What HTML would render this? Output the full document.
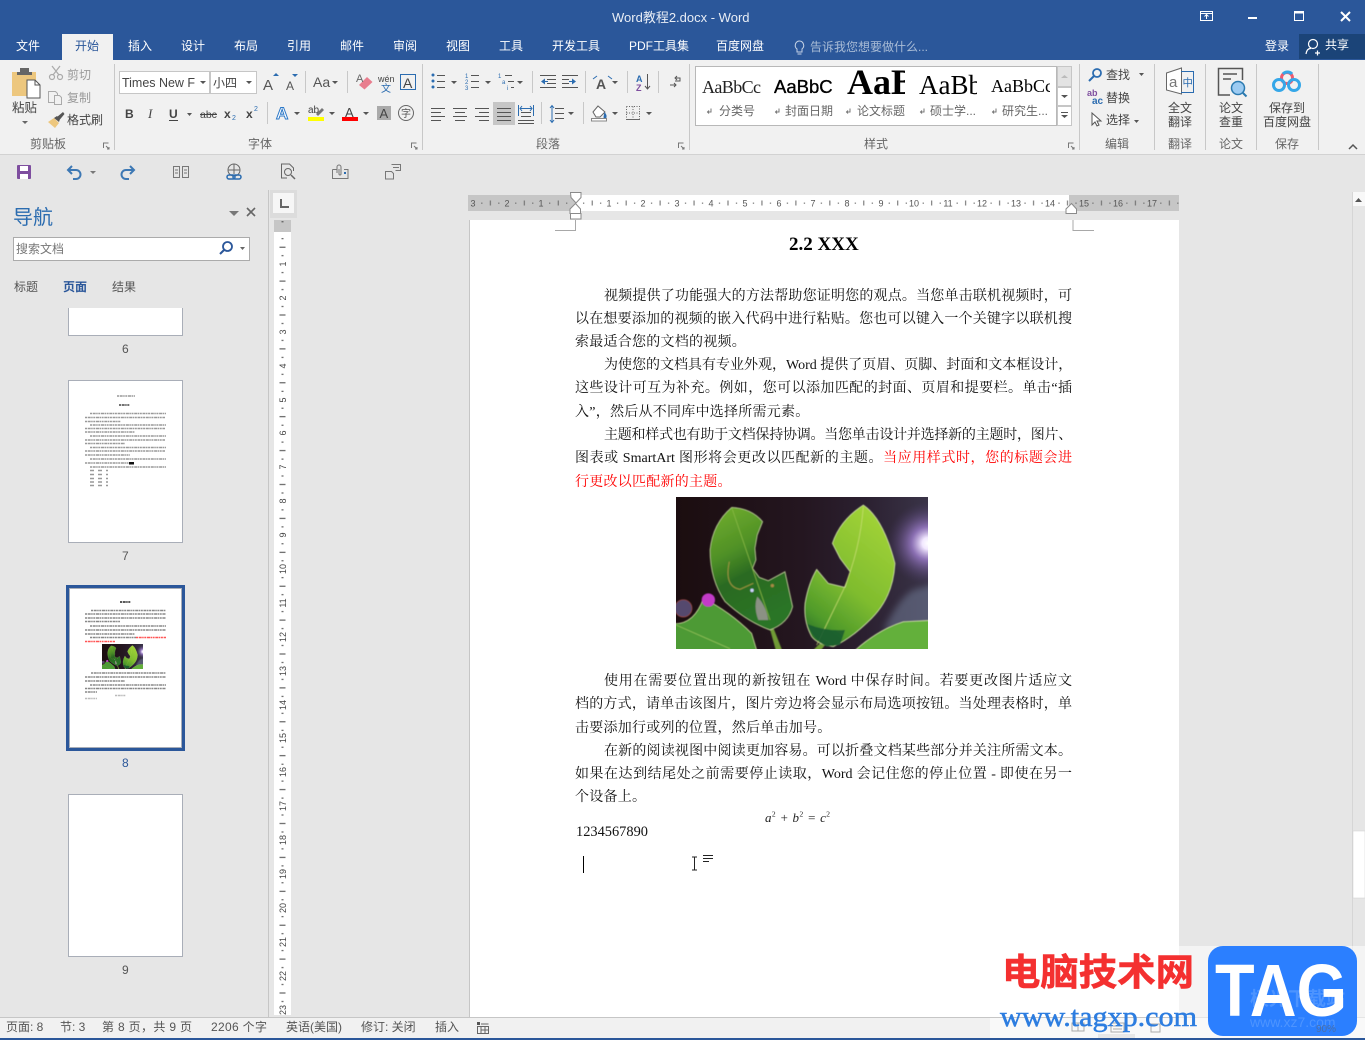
<!DOCTYPE html>
<html lang="zh"><head><meta charset="utf-8"><title>Word教程2.docx - Word</title>
<style>
html,body{margin:0;padding:0;background:#e6e6e6}
#root{position:relative;width:1365px;height:1040px;overflow:hidden;background:#e6e6e6}
svg{position:absolute;left:0;top:0}
svg text{font-family:"Liberation Sans","Noto Sans CJK SC",sans-serif}
.r{font-size:12px;fill:#444}.g{font-size:12px;fill:#666}.w{font-size:12px;fill:#fff}.d{font-size:12px;fill:#9a9a9a}
.s{font-size:12px;fill:#555}.ru{font-size:9px;fill:#555;text-anchor:middle}
.l{fill:none;stroke:#555;stroke-width:1}.b{fill:none;stroke:#2b6cb0;stroke-width:1}
.dl{position:absolute;font:14px/23px "Liberation Serif","Noto Serif CJK SC",serif;color:#111;text-align:justify;text-align-last:justify;white-space:nowrap}
.f{left:575px;width:497px}.i{left:604px;width:468px}.e{left:575px;text-align-last:left}.red{color:#f00}
</style></head><body><div id="root">
<svg width="1365" height="1040" viewBox="0 0 1365 1040">
<defs>
<filter id="bl" x="-5%" y="-5%" width="110%" height="110%"><feGaussianBlur stdDeviation="1.500"/></filter>
<filter id="bl2" x="-10%" y="-10%" width="120%" height="120%"><feGaussianBlur stdDeviation="10"/></filter>
<filter id="tb" x="-5%" y="-5%" width="110%" height="110%"><feGaussianBlur stdDeviation=".35"/></filter>
<pattern id="hp" patternUnits="userSpaceOnUse" width="33.95" height="16" patternTransform="translate(575,195)"><rect x="8.2" y="7.5" width="1" height="1.4" fill="#666"/><rect x="16.7" y="5.5" width="1" height="5" fill="#666"/><rect x="25.2" y="7.5" width="1" height="1.4" fill="#666"/></pattern>
<pattern id="vp" patternUnits="userSpaceOnUse" width="17" height="33.9" patternTransform="translate(274,230)"><rect x="7.5" y="8.2" width="2" height="1" fill="#444"/><rect x="5.5" y="16.7" width="6" height="1" fill="#444"/><rect x="7.5" y="25.2" width="2" height="1" fill="#444"/></pattern>
<linearGradient id="lg1" x1="0" y1="0" x2=".35" y2="1"><stop offset="0" stop-color="#74b02e"/><stop offset=".4" stop-color="#4f9026"/><stop offset=".62" stop-color="#2a6a22"/><stop offset="1" stop-color="#2c7426"/></linearGradient>
<linearGradient id="lg2" x1=".7" y1="0" x2=".2" y2="1"><stop offset="0" stop-color="#a2d338"/><stop offset=".55" stop-color="#7fbc2e"/><stop offset=".85" stop-color="#4f9a2c"/><stop offset="1" stop-color="#2c7428"/></linearGradient>
<radialGradient id="sun" cx="774" cy="160" r="125" gradientUnits="userSpaceOnUse"><stop offset="0" stop-color="#fff"/><stop offset=".14" stop-color="#f2e8ff"/><stop offset=".4" stop-color="#a583d6" stop-opacity=".75"/><stop offset="1" stop-color="#4a3a68" stop-opacity="0"/></radialGradient>
<linearGradient id="bgl" x1="0" y1="0" x2="1" y2="0"><stop offset="0" stop-color="#1b0d0f"/><stop offset=".5" stop-color="#241620"/><stop offset=".75" stop-color="#2b2030"/><stop offset="1" stop-color="#3a3448"/></linearGradient>
<symbol id="leaf" viewBox="18 21 756 456" preserveAspectRatio="none">
<rect x="18" y="21" width="756" height="456" fill="url(#bgl)"/>
<path d="M640 420Q690 320 730 300L800 280V420Z" fill="#75819c" opacity=".5" filter="url(#bl2)"/>
<rect x="18" y="21" width="756" height="456" fill="url(#sun)"/>
<g filter="url(#bl)">
<circle cx="40" cy="355" r="26" fill="#54486e" stroke="#a44a3c" stroke-width="2"/>
<path d="M305 400L340 490H320L295 400Z" fill="#6f9a36"/><path d="M470 440L420 490H445L490 435Z" fill="#6f9a36"/>
<path d="M185 52Q245 55 278 95L262 135L255 175L258 210L248 235L268 262L295 272L345 245L368 350Q355 400 300 420Q230 395 165 335Q120 270 120 180Q128 100 185 52Z" fill="url(#lg1)" stroke="#c9dba0" stroke-width="2"/>
<path d="M185 52L300 390" stroke="#8cbb46" stroke-width="2" fill="none"/><path d="M178 215Q162 290 210 298L250 280" stroke="#9a9440" stroke-width="3" fill="none"/>
<path d="M262 320Q290 350 295 390L265 390Q250 350 262 320Z" fill="#8b9184"/><circle cx="246" cy="301" r="5" fill="#cfd6ff"/><circle cx="307" cy="287" r="5" fill="#a88a44"/>
<path d="M580 45Q640 85 675 220Q670 320 605 385Q545 445 490 470Q445 465 425 440Q400 395 405 340Q415 280 440 238L475 280L525 292L540 245L510 205L487 160Q510 90 580 45Z" fill="url(#lg2)" stroke="#dcebb0" stroke-width="2"/>
<path d="M580 50Q570 180 520 300L440 465" stroke="#c9df70" stroke-width="2" fill="none"/>
<path d="M412 402Q470 425 525 420L510 465L470 470Q430 450 412 402Z" fill="#1b5c30" opacity=".9"/>
<path d="M100 325Q180 365 245 430L263 490H0V400Q70 410 100 325Z" fill="#4d9a34" stroke="#cfe3a0" stroke-width="2"/>
<path d="M18 405L180 476" stroke="#9cc860" stroke-width="2" fill="none"/>
<path d="M545 490Q620 420 700 395L800 390V490Z" fill="#63b03a" stroke="#dcebb0" stroke-width="2"/>
<circle cx="115" cy="330" r="20" fill="#c33ac8"/>
</g>
</symbol>
</defs>

<!-- title / tabs -->
<rect width="1365" height="60" fill="#2b579a"/>
<text x="612" y="22" style="font-size:13px;fill:#e8edf5">Word教程2.docx - Word</text>
<g fill="none" stroke="#fff" stroke-width="1"><rect x="1200.5" y="11.5" width="12" height="9"/><path d="M1200 13.5h13M1206.5 19v-4M1204.5 16.5l2-2 2 2"/><rect x="1294.5" y="11.5" width="9" height="9" /><path d="M1294 12.5h10" stroke-width="2"/><path d="M1341 12l9 9M1350 12l-9 9" stroke-width="2"/></g>
<rect x="1248" y="17" width="9" height="2" fill="#fff"/>
<rect x="62" y="34" width="51" height="26" fill="#f1f1f1"/>
<rect x="1299" y="34" width="66" height="25" fill="#1b4478"/>
<g class="tabs">
<text x="16" y="50" class="w">文件</text><text x="75" y="50" class="r" style="fill:#2b579a">开始</text><text x="128" y="50" class="w">插入</text><text x="181" y="50" class="w">设计</text><text x="234" y="50" class="w">布局</text><text x="287" y="50" class="w">引用</text><text x="340" y="50" class="w">邮件</text><text x="393" y="50" class="w">审阅</text><text x="446" y="50" class="w">视图</text><text x="499" y="50" class="w">工具</text><text x="552" y="50" class="w">开发工具</text><text x="629" y="50" class="w">PDF工具集</text><text x="716" y="50" class="w">百度网盘</text>
<text x="810" y="51" style="font-size:12px;fill:#a9bcd6">告诉我您想要做什么...</text>
<text x="1265" y="50" class="w">登录</text><text x="1325" y="49" class="w">共享</text></g>
<path d="M799 41a4.5 4.5 0 0 1 3 8v3h-5v-3a4.5 4.5 0 0 1 2-8zM797.500 54h4" fill="none" stroke="#c5d2e5"/>
<g fill="none" stroke="#fff" stroke-width="1.200"><circle cx="1313" cy="44" r="4.500"/><path d="M1306 54q1-6 5-5.500M1315 53h5M1317.500 50.500v5"/></g>

<!-- ribbon -->
<rect y="60" width="1365" height="94" fill="#f1f1f1"/><rect y="154" width="1365" height="1" fill="#d2d2d2"/>
<g fill="#c8c8c8"><rect x="114" y="64" width="1" height="86"/><rect x="422" y="64" width="1" height="86"/><rect x="689" y="64" width="1" height="86"/><rect x="1079" y="64" width="1" height="86"/><rect x="1154" y="64" width="1" height="86"/><rect x="1205" y="64" width="1" height="86"/><rect x="1256" y="64" width="1" height="86"/><rect x="1318" y="64" width="1" height="86"/>
<rect x="305" y="71" width="1" height="22"/><rect x="347" y="71" width="1" height="22"/><rect x="267" y="102" width="1" height="22"/><rect x="532" y="71" width="1" height="22"/><rect x="585" y="71" width="1" height="22"/><rect x="627" y="71" width="1" height="22"/><rect x="658" y="71" width="1" height="22"/><rect x="541" y="102" width="1" height="22"/><rect x="583" y="102" width="1" height="22"/></g>
<g class="labels"><text x="30" y="148" class="g">剪贴板</text><text x="248" y="148" class="g">字体</text><text x="536" y="148" class="g">段落</text><text x="864" y="148" class="g">样式</text><text x="1105" y="148" class="g">编辑</text><text x="1168" y="148" class="g">翻译</text><text x="1219" y="148" class="g">论文</text><text x="1275" y="148" class="g">保存</text></g>
<!-- launchers -->
<g fill="none" stroke="#777"><path d="M103.500 148v-5h5M106 146l3 3M109 147v2h-2"/><path d="M411.500 148v-5h5M414 146l3 3M417 147v2h-2"/><path d="M678.500 148v-5h5M681 146l3 3M684 147v2h-2"/><path d="M1068.500 148v-5h5M1071 146l3 3M1074 147v2h-2"/></g>
<path d="M1349 149l4-4 4 4" fill="none" stroke="#555" stroke-width="1.500"/>

<!-- clipboard -->
<path d="M12 72h24v24H12z" fill="#edc77e"/><rect x="20" y="68" width="9" height="6" fill="#666"/><rect x="17" y="72" width="15" height="3" fill="#666"/>
<path d="M27 80h8l5 5v13H27z" fill="#fff" stroke="#555"/><path d="M35 80v5h5" fill="none" stroke="#555"/>
<text x="12" y="112" class="r" style="font-size:12.500px">粘贴</text><path d="M22 121h6l-3 3z" fill="#666"/>
<g fill="none" stroke="#aaa" stroke-width="1.200"><circle cx="52" cy="77" r="2.500"/><circle cx="60" cy="77" r="2.500"/><path d="M53 75l7-9M59 75l-7-9"/></g>
<g fill="none" stroke="#aaa"><path d="M48.500 91.500h7l2 2v9h-9z"/><path d="M54.500 95.500h5l2 2v7h-7z" fill="#f1f1f1"/></g>
<text x="67" y="79" class="d">剪切</text><text x="67" y="102" class="d">复制</text>
<path d="M48 122l6-4 5 5-4 5z" fill="#edc77e"/><path d="M54 118l3-2 3 3-1 3zM57 117l6-5 1.500 2-5 6z" fill="#555"/>
<text x="67" y="124" class="r">格式刷</text>

<!-- font -->
<rect x="119.500" y="71.500" width="90" height="22" fill="#fff" stroke="#c6c6c6"/><rect x="210.500" y="71.500" width="46" height="22" fill="#fff" stroke="#c6c6c6"/>
<text x="122" y="87" textLength="73" style="font-size:12.500px;fill:#444">Times New F</text><text x="213" y="87" class="r">小四</text>
<g fill="#555"><path d="M200 81h6l-3 3zM246 81h6l-3 3zM332 81h6l-3 3zM187 113h5l-2.500 3zM294 112h6l-3 3zM329 112h6l-3 3zM363 112h6l-3 3zM451 81h6l-3 3zM485 81h6l-3 3zM517 81h6l-3 3zM612 81h6l-3 3zM568 112h6l-3 3zM612 112h6l-3 3zM646 112h6l-3 3zM1139 73h5l-2.500 3zM1134 120h5l-2.500 3z"/></g>
<text x="263" y="90" style="font-size:15px;fill:#555">A</text><path d="M273 76l3-3 3 3z" fill="#2b6cb0"/>
<text x="286" y="90" style="font-size:12px;fill:#555">A</text><path d="M292 74h6l-3 3z" fill="#2b6cb0"/>
<text x="313" y="87" style="font-size:14px;fill:#555">Aa</text>
<path d="M359 85l8-8 5.500 5-8 7.500z" fill="#e87d8e"/><text x="356" y="82" style="font-size:11px;fill:#666">A</text>
<text x="378" y="82" style="font-size:9px;fill:#444">wén</text><text x="381" y="92" style="font-size:10px;fill:#2b6cb0">文</text>
<rect x="400.500" y="74.500" width="15" height="15" fill="none" stroke="#2b6cb0"/><text x="403" y="88" style="font-size:14px;fill:#444">A</text>
<text x="125" y="118" style="font-size:12px;font-weight:700;fill:#444">B</text><text x="148" y="118" style="font-size:13px;font-style:italic;font-family:'Liberation Serif';fill:#444">I</text>
<text x="169" y="118" style="font-size:12px;font-weight:700;fill:#444">U</text><rect x="169" y="120" width="9" height="1" fill="#444"/>
<text x="200" y="118" style="font-size:10.500px;fill:#444">abc</text><rect x="200" y="114" width="17" height="1" fill="#444"/>
<text x="224" y="118" style="font-size:12px;font-weight:700;fill:#444">x</text><text x="232" y="120" style="font-size:7px;fill:#2b6cb0">2</text>
<text x="246" y="118" style="font-size:12px;font-weight:700;fill:#444">x</text><text x="254" y="111" style="font-size:7px;fill:#2b6cb0">2</text>
<text x="276" y="119" style="font-size:17px;fill:#fff;stroke:#2b78c8;stroke-width:1;font-weight:700">A</text>
<text x="308" y="113" style="font-size:10px;fill:#444">ab</text><path d="M316 114l6-6 2 2-6 6z" fill="#777"/><rect x="308" y="117" width="16" height="4" fill="#ff0"/>
<text x="345" y="117" style="font-size:13px;fill:#444">A</text><rect x="342" y="117" width="16" height="4" fill="#f00"/>
<rect x="377" y="106" width="14" height="14" fill="#aaa"/><text x="379.500" y="118" style="font-size:13px;fill:#444">A</text>
<circle cx="406" cy="113" r="7.500" fill="none" stroke="#666"/><text x="401" y="117" style="font-size:10px;fill:#555">字</text>

<!-- paragraph -->
<g fill="#2b6cb0"><circle cx="433" cy="75" r="1.500"/><circle cx="433" cy="81" r="1.500"/><circle cx="433" cy="87" r="1.500"/></g>
<path class="l" d="M437 75.500h8M437 81.500h8M437 87.500h8M471 75.500h8M471 81.500h8M471 87.500h8M505 75.500h7M508 81.500h6M511 87.500h3"/>
<text x="465" y="78" style="font-size:6px;fill:#2b6cb0">1</text><text x="465" y="84" style="font-size:6px;fill:#2b6cb0">2</text><text x="465" y="90" style="font-size:6px;fill:#2b6cb0">3</text>
<text x="498" y="78" style="font-size:6px;fill:#2b6cb0">1</text><text x="502" y="84" style="font-size:6px;fill:#2b6cb0">a</text><text x="507" y="90" style="font-size:6px;fill:#2b6cb0">i</text>
<path class="l" d="M540 75.500h16M547 79.500h9M547 83.500h9M540 87.500h16M562 75.500h16M562 79.500h7M562 83.500h7M562 87.500h16"/>
<path d="M541 81.500l4-3v6z" fill="#2b6cb0"/><path d="M576 81.500l-4-3v6z" fill="#2b6cb0"/><path class="b" d="M545 81.500h3M569 81.500h4"/>
<text x="596" y="89" style="font-size:14px;font-weight:700;fill:#555">A</text><path class="b" d="M593 79l4-3M612 79l-4-3" stroke-width="1.500"/>
<text x="636" y="82" style="font-size:9px;fill:#2b6cb0;font-weight:700">A</text><text x="636" y="91" style="font-size:9px;fill:#7e4e9f;font-weight:700">Z</text><path class="l" d="M647.500 74v15M645 86l2.500 3 2.500-3"/>
<path class="l" d="M676 78h4v3h-5M677 76l-2 2 2 2M670 85h6M674 83l2 2-2 2"/>
<rect x="493" y="102" width="22" height="23" fill="#c6c6c6"/>
<path class="l" d="M431 108.500h14M431 112.500h10M431 116.500h14M431 120.500h10M453 108.500h14M455 112.500h10M453 116.500h14M455 120.500h10M475 108.500h14M479 112.500h10M475 116.500h14M479 120.500h10M497 108.500h14M497 112.500h14M497 116.500h14M497 120.500h14M521 112.500h10M521 116.500h10M518 120.500h16M518 123.500h16"/>
<path class="b" d="M518.500 105v11M533.500 105v11M520 108.500h12M522 106l-2 2.500 2 2.500M530 106l2 2.500-2 2.500"/>
<path class="l" d="M555 108.500h9M555 113.500h9M555 118.500h9"/><path class="b" d="M552 106v16M550 108l2-2.500 2 2.500M550 120l2 2.500 2-2.500"/>
<path d="M593 112l5-6 7 6-5 5h-4z" fill="#fff" stroke="#666"/><path d="M604.500 112q2.500 3 2 5a1.500 1.500 0 0 1-3 0z" fill="#2b6cb0"/><rect x="591.500" y="118.500" width="15" height="2.500" fill="#fff" stroke="#888"/>
<path d="M626.500 106.500h13v13M626.500 106.500v13M633 106.500v13M626.500 113h13" fill="none" stroke="#666" stroke-dasharray="1 1.500"/><path d="M626 119.500h14" stroke="#666"/>

<!-- styles -->
<rect x="695.500" y="66.500" width="361" height="59" fill="#fff" stroke="#b8b8b8"/>
<rect x="1057.500" y="66.500" width="14" height="20" fill="#e3e3e3" stroke="#c6c6c6"/><rect x="1057.500" y="87.500" width="14" height="18" fill="#fff" stroke="#c6c6c6"/><rect x="1057.500" y="106.500" width="14" height="19" fill="#fff" stroke="#c6c6c6"/>
<path d="M1061 78l3.500-3 3.500 3z" fill="#bbb"/><path d="M1061 95h7l-3.500 3zM1061 115h7l-3.500 3z" fill="#555"/><rect x="1061" y="112" width="7" height="1" fill="#555"/>
<svg x="702" y="70" width="60" height="30"><text x="0" y="23" style="font:18px 'Liberation Serif';fill:#222" textLength="59">AaBbCc</text></svg>
<svg x="774" y="70" width="59" height="30"><text x="0" y="23" style="font-size:18.500px;fill:#000;stroke:#000;stroke-width:.35;font-family:'Liberation Sans'">AaBbCc</text></svg>
<svg x="847" y="66" width="58" height="34"><text x="0" y="28" style="font:bold 36px 'Liberation Serif';fill:#000">AaB</text></svg>
<svg x="919" y="66" width="58" height="34"><text x="0" y="28" style="font:27px 'Liberation Serif';fill:#000">AaBb</text></svg>
<svg x="991" y="70" width="59" height="30"><text x="0" y="22" style="font:18px 'Liberation Serif';fill:#000">AaBbCc</text></svg>
<g fill="none" stroke="#777"><path d="M711 108.500v3.500h-3M709 110.500l-1.500 1.500 1.500 1.500M779 108.500v3.500h-3M777 110.500l-1.500 1.500 1.500 1.500M850 108.500v3.500h-3M848 110.500l-1.500 1.500 1.500 1.500M924 108.500v3.500h-3M922 110.500l-1.500 1.500 1.500 1.500M996 108.500v3.500h-3M994 110.500l-1.500 1.500 1.500 1.500"/></g>
<text x="719" y="115" class="g">分类号</text><text x="785" y="115" class="g">封面日期</text><text x="857" y="115" class="g">论文标题</text><text x="930" y="115" class="g">硕士学...</text><text x="1002" y="115" class="g">研究生...</text>

<!-- edit -->
<circle cx="1097" cy="73" r="4" fill="none" stroke="#2b6cb0" stroke-width="1.800"/><path d="M1094 76l-5 5" stroke="#2b6cb0" stroke-width="2"/>
<text x="1087" y="96" style="font-size:9px;font-weight:700;fill:#7e4e9f">ab</text><text x="1092" y="104" style="font-size:10px;font-weight:700;fill:#2b6cb0">ac</text>
<path d="M1092 113v12l3-3 2 4 2-1-2-4h4z" fill="#fff" stroke="#555"/>
<text x="1106" y="79" class="r">查找</text><text x="1106" y="102" class="r">替换</text><text x="1106" y="124" class="r">选择</text>
<!-- translate -->
<path d="M1166.500 73l15-5v26l-15-4z" fill="#fff" stroke="#666"/><text x="1169" y="87" style="font-size:15px;fill:#777">a</text>
<path d="M1181 71.500h12.500v21H1181" fill="none" stroke="#2b6cb0"/><text x="1182.500" y="86" style="font-size:10.500px;fill:#2b6cb0">中</text>
<text x="1168" y="112" class="r">全文</text><text x="1168" y="126" class="r">翻译</text>
<!-- paper -->
<path d="M1220 95h-1.500V68.500h24V80" fill="none" stroke="#555" stroke-width="1.500"/><path d="M1223 74h14M1223 79h8" stroke="#555" stroke-width="1.500"/><path d="M1220 95h10" stroke="#555" stroke-width="1.500"/>
<circle cx="1238" cy="88" r="6.500" fill="#9ccbf2" stroke="#2b7ab0" stroke-width="1.500"/><path d="M1243 93l3.500 3.500" stroke="#2b7ab0" stroke-width="2"/>
<text x="1219" y="112" class="r">论文</text><text x="1219" y="126" class="r">查重</text>
<!-- baidu -->
<g fill="none" stroke-width="3"><circle cx="1287" cy="78" r="5.500" stroke="#ef5a6f"/><circle cx="1279" cy="85" r="5.500" stroke="#35a7e8"/><circle cx="1294" cy="85" r="5.500" stroke="#35a7e8"/></g><path d="M1283 74a6 6 0 0 1 9 0" fill="none" stroke="#35a7e8" stroke-width="3"/>
<text x="1269" y="112" class="g" style="fill:#444">保存到</text><text x="1263" y="126" class="r">百度网盘</text>

<!-- QAT -->
<rect x="17" y="165" width="14" height="14" rx="1" fill="#7e4e9f"/><rect x="20" y="166" width="8" height="5" fill="#fff"/><rect x="20" y="174" width="8" height="5" fill="#fff"/>
<g fill="none" stroke="#3d78b4" stroke-width="2"><path d="M68 170h8a4.500 4.500 0 0 1 0 9h-3"/><path d="M72 166l-4 4 4 4"/><path d="M134 170h-8a4.500 4.500 0 0 0 0 9h3"/><path d="M130 166l4 4-4 4"/></g>
<path d="M90 171h6l-3 3z" fill="#777"/>
<path d="M173.500 166.500h6v11h-6zM182.500 166.500h6v11h-6zM175 170h3M175 173h3M184 170h3M184 173h3" fill="none" stroke="#777"/>
<circle cx="234" cy="170" r="6" fill="none" stroke="#666"/><path d="M228 170h12M234 164v10" stroke="#666"/><rect x="227" y="175" width="8" height="4" rx="2" fill="none" stroke="#2b6cb0" stroke-width="1.500"/><rect x="233" y="175" width="8" height="4" rx="2" fill="none" stroke="#2b6cb0" stroke-width="1.500"/>
<path d="M287 178h-5.500v-14h8l4 4v3" fill="none" stroke="#666"/><circle cx="288" cy="172" r="3.500" fill="none" stroke="#666"/><path d="M291 175l4 4" stroke="#666" stroke-width="1.500"/>
<path d="M332.500 169.500h4M344 169.500h4v9h-15.500v-9" fill="none" stroke="#777"/><path d="M337 173v-6a2 2 0 0 1 4 0v7a1 1 0 0 1-2 0v-5" fill="none" stroke="#777"/><rect x="344" y="172" width="2" height="2" fill="#2b6cb0"/>
<path d="M385.500 171.500h6l2 2v5.500h-8zM391.500 164.500h9v6h-5" fill="none" stroke="#777"/><path d="M393 167.500h6" stroke="#777"/>

<!-- nav pane -->
<rect x="268" y="190" width="1" height="827" fill="#c6c6c6"/>
<text x="13" y="224" style="font-size:20px;fill:#2b6cb0">导航</text>
<path d="M229 211h10l-5 5z" fill="#777"/><path d="M247 208l8 8M255 208l-8 8" stroke="#666" stroke-width="1.600"/>
<rect x="13.500" y="237.500" width="236" height="23" fill="#fff" stroke="#ababab"/>
<text x="16" y="253" class="s" style="fill:#777">搜索文档</text>
<circle cx="227.500" cy="246.500" r="4.500" fill="none" stroke="#2b579a" stroke-width="1.800"/><path d="M224 250l-4 4" stroke="#2b579a" stroke-width="2"/><path d="M240 247h5l-2.500 3z" fill="#666"/>
<text x="14" y="291" class="s">标题</text><text x="63" y="291" class="s" style="fill:#2b579a;font-weight:700">页面</text><text x="112" y="291" class="s">结果</text>
<!-- thumbs -->
<rect x="68.500" y="307" width="114" height="28.500" fill="#fff" stroke="#a9aeb8"/><rect x="68" y="300" width="115" height="8" fill="#e6e6e6"/>
<text x="122" y="353" class="s">6</text>
<rect x="68.500" y="380.500" width="114" height="162" fill="#fff" stroke="#a9aeb8"/>
<text x="122" y="560" class="s">7</text>
<g fill="none" stroke="#999" stroke-width="1.400" stroke-dasharray="2 .7 3 .5 1.500 .6" filter="url(#tb)">
<path d="M117 396h18"/><path d="M119 405h11" stroke="#444"/>
<path d="M90 413.500h76M85 417.500h80M85 421.500h36M90 425h76M85 428.500h80M85 432h50M90 436h76M85 440h80M85 443.500h40M90 447.500h76M85 451h80M85 455h45M90 459h76M85 463h48M90 467h76"/>
<path d="M90 470.500h18M90 474.500h18M90 478.500h18M90 482h18M90 485.500h18" stroke-dasharray="4 4"/>
</g><rect x="129" y="462" width="5" height="2.500" fill="#111"/>
<rect x="67.500" y="586.500" width="116" height="163" fill="#fff" stroke="#2b579a" stroke-width="3"/><rect x="69.500" y="588.500" width="112" height="159" fill="none" stroke="#a9aeb8"/>
<text x="122" y="767" style="font-size:12px;fill:#2b579a">8</text>
<g fill="none" stroke="#888" stroke-width="1.400" stroke-dasharray="2 .7 3 .5 1.500 .6" filter="url(#tb)">
<path d="M120 602h11" stroke="#222"/>
<path d="M91 610.500h75M85 614h81M85 618h81M85 621.500h35M90 626h76M85 630h81M85 634h50M90 637.500h46"/>
<path d="M136 637.500h30M85 641.500h30" stroke="#f55"/>
<path d="M91 673h75M85 677h81M85 681h40M90 685h76M85 688.500h81M85 692h12"/>
<path d="M115 695.500h11M85 698.500h12" stroke="#bbb"/>
</g>
<use href="#leaf" x="102" y="644" width="41" height="25"/>
<rect x="68.500" y="794.500" width="114" height="162" fill="#fff" stroke="#a9aeb8"/>
<text x="122" y="974" class="s">9</text>

<!-- L box + vertical ruler -->
<rect x="270" y="190" width="27" height="28" fill="#dcdcdc"/><rect x="273" y="193" width="21" height="20" fill="#f6f6f6"/><path d="M281 199v8h8" fill="none" stroke="#666" stroke-width="2"/>
<rect x="274" y="220" width="17" height="12" fill="#c6c6c6"/><rect x="274" y="232" width="17" height="783" fill="#fff"/><rect x="274" y="220" width="17" height="795" fill="url(#vp)"/>
<g class="ru" style="font-size:9px;fill:#444;text-anchor:middle">
<text transform="translate(286,264) rotate(-90)">1</text><text transform="translate(286,298) rotate(-90)">2</text><text transform="translate(286,332) rotate(-90)">3</text><text transform="translate(286,366) rotate(-90)">4</text><text transform="translate(286,400) rotate(-90)">5</text><text transform="translate(286,433) rotate(-90)">6</text><text transform="translate(286,467) rotate(-90)">7</text><text transform="translate(286,501) rotate(-90)">8</text><text transform="translate(286,535) rotate(-90)">9</text><text transform="translate(286,569) rotate(-90)">10</text><text transform="translate(286,603) rotate(-90)">11</text><text transform="translate(286,637) rotate(-90)">12</text><text transform="translate(286,671) rotate(-90)">13</text><text transform="translate(286,705) rotate(-90)">14</text><text transform="translate(286,738) rotate(-90)">15</text><text transform="translate(286,772) rotate(-90)">16</text><text transform="translate(286,806) rotate(-90)">17</text><text transform="translate(286,840) rotate(-90)">18</text><text transform="translate(286,874) rotate(-90)">19</text><text transform="translate(286,908) rotate(-90)">20</text><text transform="translate(286,942) rotate(-90)">21</text><text transform="translate(286,976) rotate(-90)">22</text><text transform="translate(286,1010) rotate(-90)">23</text>
</g>

<!-- page -->
<rect x="470" y="220" width="709" height="798" fill="#fff"/><rect x="469" y="220" width="1" height="798" fill="#c6c6c6"/>
<path d="M555 230.500h20.500V220M1094 230.500h-21V220" fill="none" stroke="#a8a8a8"/>

<!-- horiz ruler -->
<rect x="468" y="195" width="711" height="16" fill="#c6c6c6"/><rect x="575" y="195" width="494" height="16" fill="#fff"/><rect x="468" y="195" width="711" height="16" fill="url(#hp)"/>
<g class="rt"><text class="ru" x="473" y="206.500">3</text><text class="ru" x="507" y="206.500">2</text><text class="ru" x="541" y="206.500">1</text><text class="ru" x="609" y="206.500">1</text><text class="ru" x="643" y="206.500">2</text><text class="ru" x="677" y="206.500">3</text><text class="ru" x="711" y="206.500">4</text><text class="ru" x="745" y="206.500">5</text><text class="ru" x="779" y="206.500">6</text><text class="ru" x="813" y="206.500">7</text><text class="ru" x="847" y="206.500">8</text><text class="ru" x="881" y="206.500">9</text><text class="ru" x="914" y="206.500">10</text><text class="ru" x="948" y="206.500">11</text><text class="ru" x="982" y="206.500">12</text><text class="ru" x="1016" y="206.500">13</text><text class="ru" x="1050" y="206.500">14</text><text class="ru" x="1084" y="206.500">15</text><text class="ru" x="1118" y="206.500">16</text><text class="ru" x="1152" y="206.500">17</text></g>
<path d="M570.500 192.500h10.500v5l-5 5.500-5-5.500zM575.500 203.500l5 5.500v4.500h-10.500V209zM570.500 213.500h10.500v5.500h-10.500z" fill="#fff" stroke="#8a8a8a"/>
<path d="M1071.500 203.500l5 5.500v4.500h-10.500V209z" fill="#fff" stroke="#8a8a8a"/>

<!-- scrollbar -->
<rect x="1352" y="192" width="13" height="14" fill="#f8f8f8"/><path d="M1355 202l3.500-4 3.500 4z" fill="#555"/><rect x="1352" y="192" width="1" height="826" fill="#d6d6d6"/>
<rect x="1353" y="831" width="12" height="67" fill="#fff" stroke="#cfcfcf" stroke-width=".5"/>

<!-- status bar -->
<rect y="1018" width="1365" height="20" fill="#f1f1f1"/><rect y="1017" width="1365" height="1" fill="#c6c6c6"/><rect y="1038" width="1365" height="2" fill="#2b579a"/>
<text x="6" y="1031" class="s">页面: 8</text><text x="60" y="1031" class="s">节: 3</text><text x="102" y="1031" class="s" textLength="90">第 8 页，共 9 页</text><text x="211" y="1031" class="s" textLength="56">2206 个字</text><text x="286" y="1031" class="s">英语(美国)</text><text x="361" y="1031" class="s">修订: 关闭</text><text x="435" y="1031" class="s">插入</text>
<rect x="477" y="1022" width="3" height="3" fill="#555"/><path d="M477.500 1026.500h11v7h-11zM481 1024h7.500M481 1030h7M481 1026v7M485 1026v7" fill="none" stroke="#666"/>
</svg>

<div class="dl" style="left:789px;top:233px;font-size:19px;font-weight:700;text-align-last:left;color:#000">2.2 XXX</div>
<div class="dl i" style="top:285px">视频提供了功能强大的方法帮助您证明您的观点。当您单击联机视频时，可</div>
<div class="dl f" style="top:308px">以在想要添加的视频的嵌入代码中进行粘贴。您也可以键入一个关键字以联机搜</div>
<div class="dl e" style="top:331px;letter-spacing:.25px">索最适合您的文档的视频。</div>
<div class="dl i" style="top:354px">为使您的文档具有专业外观，Word 提供了页眉、页脚、封面和文本框设计，</div>
<div class="dl f" style="top:377px">这些设计可互为补充。例如，您可以添加匹配的封面、页眉和提要栏。单击“插</div>
<div class="dl e" style="top:401px;letter-spacing:.25px">入”，然后从不同库中选择所需元素。</div>
<div class="dl i" style="top:424px;letter-spacing:-.3px">主题和样式也有助于文档保持协调。当您单击设计并选择新的主题时，图片、</div>
<div class="dl f" style="top:447px">图表或 SmartArt 图形将会更改以匹配新的主题。<span class="red">当应用样式时，您的标题会进</span></div>
<div class="dl e red" style="top:471px;letter-spacing:.25px">行更改以匹配新的主题。</div>
<svg style="left:676px;top:497px" width="252" height="152"><use href="#leaf" x="0" y="0" width="252" height="152"/></svg>
<div class="dl i" style="top:670px">使用在需要位置出现的新按钮在 Word 中保存时间。若要更改图片适应文</div>
<div class="dl f" style="top:693px">档的方式，请单击该图片，图片旁边将会显示布局选项按钮。当处理表格时，单</div>
<div class="dl e" style="top:717px;letter-spacing:.25px">击要添加行或列的位置，然后单击加号。</div>
<div class="dl i" style="top:740px">在新的阅读视图中阅读更加容易。可以折叠文档某些部分并关注所需文本。</div>
<div class="dl f" style="top:763px">如果在达到结尾处之前需要停止读取，Word 会记住您的停止位置 - 即使在另一</div>
<div class="dl e" style="top:786px;letter-spacing:.25px">个设备上。</div>
<div class="dl" style="left:765px;top:806px;font-size:13px;letter-spacing:.4px;font-style:italic;text-align-last:left;color:#222">a<sup style="font-size:7.500px;font-style:normal;line-height:0">2</sup> + b<sup style="font-size:7.500px;font-style:normal;line-height:0">2</sup> = c<sup style="font-size:7.500px;font-style:normal;line-height:0">2</sup></div>
<div class="dl" style="left:576px;top:821px;font-size:14.400px;text-align-last:left">1234567890</div>

<svg width="1365" height="1040" viewBox="0 0 1365 1040">
<rect x="583" y="856" width="1" height="17" fill="#000"/>
<path d="M692 857h2.500v13H692M697 857h-2.500v13H697" fill="none" stroke="#222"/><path d="M703 855.500h10M703 858.500h10M703 861.500h6" stroke="#222"/>
<!-- faint status items under watermark -->
<rect x="1098" y="1034" width="37" height="4" fill="#c6c6c6"/>
<!-- watermark -->
<rect x="990" y="946" width="189" height="71" fill="#fff"/>
<rect x="990" y="1018" width="189" height="20" fill="#fff" opacity=".6"/>
<rect x="1179" y="946" width="186" height="92" fill="#fff" opacity=".55"/>
<path d="M1072 1023h12v8h-12zM1078 1023v8M1111 1023h13v9h-13zM1113 1026h9M1113 1029h9M1151 1024h9v8h-9z" fill="none" stroke="#aaa"/>
<rect x="1208" y="946" width="149" height="90" rx="15" fill="#2b7fff"/>
<text x="1250" y="1005" style="font-size:19px;font-weight:700;fill:#4d94ff">极光下载站</text>
<text x="1250" y="1027" style="font-size:14px;fill:#4d94ff">www.xz7.com</text>
<text x="1215" y="1016" textLength="132" lengthAdjust="spacingAndGlyphs" style="font-size:74px;font-weight:700;fill:#fff;font-family:'Liberation Sans'">TAG</text>
<text x="1316" y="1032" style="font-size:10px;fill:#4a6fa8">90%</text>
<text x="1002" y="985" textLength="192" lengthAdjust="spacingAndGlyphs" style="font-size:37px;font-weight:700;fill:#f43030;stroke:#f43030;stroke-width:.6;font-family:'Noto Sans CJK SC',sans-serif">电脑技术网</text>
<text x="1000" y="1026" textLength="197" lengthAdjust="spacingAndGlyphs" style="font-size:28px;fill:#2d7de0;stroke:#2d7de0;stroke-width:.5;font-family:'Liberation Serif',serif">www.tagxp.com</text>
</svg>
</div></body></html>
